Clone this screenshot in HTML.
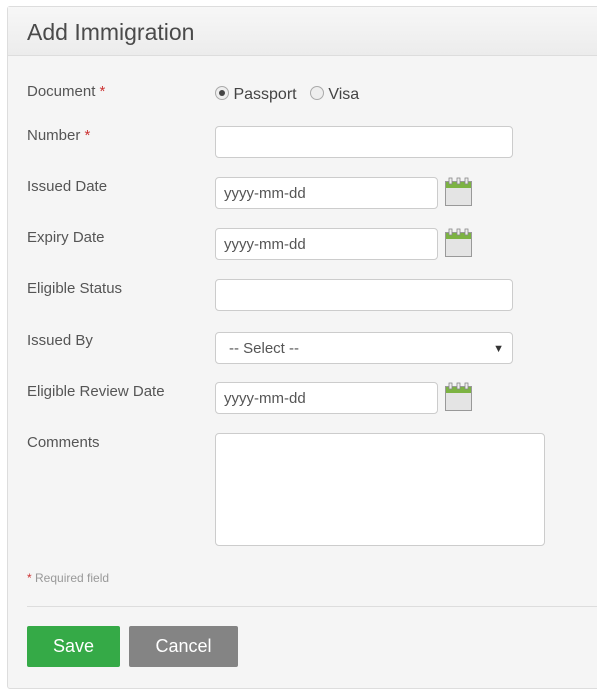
<!DOCTYPE html><html><head><style>
body{margin:0;background:#fff;font-family:"Liberation Sans",sans-serif;width:597px;height:690px;overflow:hidden;position:relative}
.panel{position:absolute;left:7px;top:6px;width:600px;height:681px;border:1px solid #ddd;background:#f5f5f5;border-radius:3px}
.hd{height:48px;border-bottom:1px solid #ddd;background:linear-gradient(#f7f7f7,#ececec);font-size:23px;color:#4a4a4a;padding-left:19px;line-height:50px}
.l{position:absolute;left:27px;font-size:15px;color:#555}
.r{color:#c33}
.in{position:absolute;left:215px;width:288px;height:30px;border:1px solid #ccc;border-radius:4px;background:#fff;font-size:15px;color:#555;line-height:32px;padding-left:8px;box-sizing:content-box}
.d{width:213px}
.cal{position:absolute;left:445px;width:27px;height:29px}
.btn{position:absolute;top:626px;height:41px;color:#fff;font-size:18px;text-align:center;line-height:41px;border-radius:2px}
</style></head><body>
<div class="panel"><div class="hd">Add Immigration</div></div>
<div class="l" style="top:83px">Document <span class="r">*</span></div>
<div style="position:absolute;left:215px;top:86px;font-size:16px;color:#444">
<span style="display:inline-block;width:12px;height:12px;border:1px solid #aaa;border-radius:50%;background:#eee;vertical-align:-1px;position:relative"><span style="position:absolute;left:3px;top:3px;width:6px;height:6px;border-radius:50%;background:#444"></span></span> Passport&nbsp;&nbsp;
<span style="display:inline-block;width:12px;height:12px;border:1px solid #aaa;border-radius:50%;background:#eee;vertical-align:-1px"></span> Visa</div>
<div class="l" style="top:127px">Number <span class="r">*</span></div>
<div class="in" style="top:126px"></div>
<div class="l" style="top:178px">Issued Date</div>
<div class="in d" style="top:177px">yyyy-mm-dd</div>
<div class="l" style="top:229px">Expiry Date</div>
<div class="in d" style="top:228px">yyyy-mm-dd</div>
<div class="l" style="top:280px">Eligible Status</div>
<div class="in" style="top:279px"></div>
<div class="l" style="top:332px">Issued By</div>
<div class="in" style="top:332px;padding-left:13px;width:283px">-- Select --<span style="position:absolute;right:8px;font-size:11px;color:#333">▼</span></div>
<div class="l" style="top:383px">Eligible Review Date</div>
<div class="in d" style="top:382px">yyyy-mm-dd</div>
<div class="l" style="top:434px">Comments</div>
<div class="in" style="top:433px;width:320px;height:111px"></div>
<div style="position:absolute;left:27px;top:571px;font-size:12px;color:#999"><span class="r">*</span> Required field</div>
<div style="position:absolute;left:27px;top:606px;width:570px;border-top:1px solid #ddd"></div>
<div class="btn" style="left:27px;width:93px;background:#35aa47">Save</div>
<div class="btn" style="left:129px;width:109px;background:#848484">Cancel</div>
<svg class="cal" style="top:177px" viewBox="0 0 27 29"><rect x="0.5" y="4.5" width="26" height="24" fill="#e4e4e4" stroke="#999"/><rect x="1" y="5" width="25" height="6" fill="#7cb342"/><rect x="4" y="1" width="3" height="6" fill="#eee" stroke="#888" stroke-width=".8"/><rect x="12" y="1" width="3" height="6" fill="#eee" stroke="#888" stroke-width=".8"/><rect x="20" y="1" width="3" height="6" fill="#eee" stroke="#888" stroke-width=".8"/></svg>
<svg class="cal" style="top:228px" viewBox="0 0 27 29"><rect x="0.5" y="4.5" width="26" height="24" fill="#e4e4e4" stroke="#999"/><rect x="1" y="5" width="25" height="6" fill="#7cb342"/><rect x="4" y="1" width="3" height="6" fill="#eee" stroke="#888" stroke-width=".8"/><rect x="12" y="1" width="3" height="6" fill="#eee" stroke="#888" stroke-width=".8"/><rect x="20" y="1" width="3" height="6" fill="#eee" stroke="#888" stroke-width=".8"/></svg>
<svg class="cal" style="top:382px" viewBox="0 0 27 29"><rect x="0.5" y="4.5" width="26" height="24" fill="#e4e4e4" stroke="#999"/><rect x="1" y="5" width="25" height="6" fill="#7cb342"/><rect x="4" y="1" width="3" height="6" fill="#eee" stroke="#888" stroke-width=".8"/><rect x="12" y="1" width="3" height="6" fill="#eee" stroke="#888" stroke-width=".8"/><rect x="20" y="1" width="3" height="6" fill="#eee" stroke="#888" stroke-width=".8"/></svg>
</body></html>
